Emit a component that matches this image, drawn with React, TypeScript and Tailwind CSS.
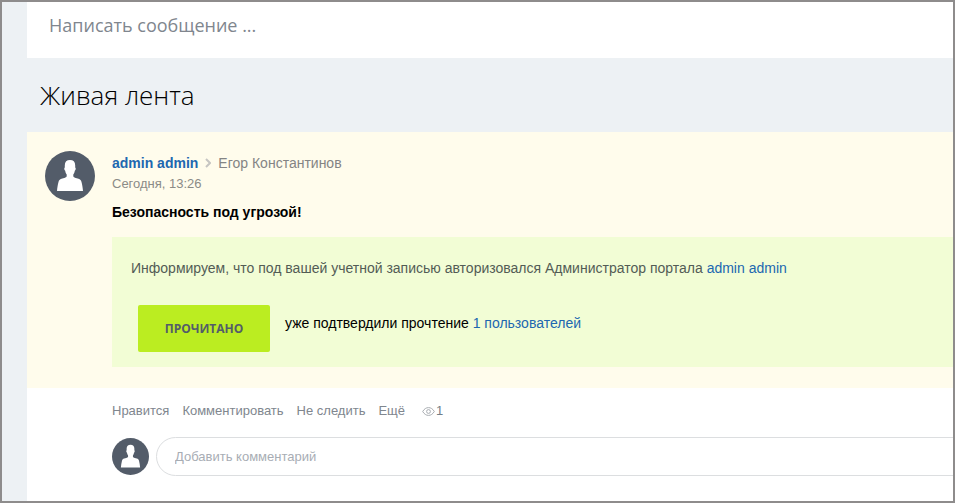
import type { ReactNode } from "react";

function Avatar({ className }: { className: string }) {
  return (
    <svg viewBox="0 0 50 50" className={`shrink-0 ${className}`} aria-hidden="true">
      <circle cx="25" cy="25" r="25" fill="#535c69" />
      <path
        fill="#fff"
        d="M25 9c3.300 0 5.200 1.900 5.200 5.200v2.300c.8.300.7 2.500-.4 3.300-.3 1.700-.8 2.900-1.500 3.700v1.700c.4 1 1.300 1.400 2.500 1.700l2.700.8c1.700.5 2.600 1.500 3 3.200.7 2.700 1.200 5.600 1.500 9.100H12c.3-3.500.8-6.400 1.500-9.100.4-1.700 1.300-2.700 3-3.200l2.700-.8c1.200-.3 2.100-.7 2.500-1.700v-1.700c-.7-.8-1.200-2-1.500-3.700-1.100-.8-1.200-3-.4-3.300v-2.300C19.800 10.900 21.700 9 25 9z"
      />
    </svg>
  );
}

function Action({ children }: { children: ReactNode }) {
  return (
    <button type="button" className="text-[#80868e]">
      {children}
    </button>
  );
}

export default function App() {
  return (
    <div className="flex min-h-screen overflow-hidden border-2 border-[#8e8c8c] bg-[#edf1f4] pl-[25px] font-['Liberation_Sans',Arial,sans-serif] text-sm">
      <main className="flex min-w-0 flex-1 flex-col">
        <input
          type="text"
          aria-label="Написать сообщение"
          placeholder="Написать сообщение ..."
          className="h-14 w-full bg-white px-[22px] pb-2.5 font-['Open_Sans',sans-serif] text-lg outline-none placeholder:text-[#80868e]"
        />
        <h1 className="px-[13px] py-[17px] font-['Open_Sans',sans-serif] text-[26px] leading-10 font-light text-black">
          Живая лента
        </h1>

        <article className="flex-1 bg-white">
          <div className="flex gap-[17px] bg-[#fffcec] pt-[19px] pb-[21px] pl-[18px]">
            <Avatar className="size-[50px]" />
            <div className="min-w-0 flex-1 pt-0.5">
              <div className="flex items-center leading-5">
                <a href="#author" className="font-bold text-[#2067b0]">
                  admin admin
                </a>
                <svg viewBox="0 0 6 10" className="mx-[7px] h-2.5 w-1.5" aria-hidden="true">
                  <path d="M1 1l4 4-4 4" fill="none" stroke="#c6c5c2" strokeWidth="2" />
                </svg>
                <a href="#recipient" className="text-[#848484]">
                  Егор Константинов
                </a>
              </div>
              <time className="mt-px block text-[13px] leading-5 text-[#8b8b87]">Сегодня, 13:26</time>
              <h2 className="mt-2 leading-5 font-bold text-black">Безопасность под угрозой!</h2>
              <div className="mt-[15px] bg-[#f2fdd5] pt-[21px] pb-[15px] pl-[19px]">
                <p className="leading-5 text-[#535c55]">
                  Информируем, что под вашей учетной записью авторизовался Администратор портала{" "}
                  <a href="#admin" className="text-[#2067b0]">
                    admin admin
                  </a>
                </p>
                <div className="mt-[27px] flex gap-[15px] pl-[7px]">
                  <button
                    type="button"
                    className="h-[47px] w-[132px] rounded-xs bg-[#bbed21] font-['Open_Sans',sans-serif] text-xs font-bold text-[#535c69]"
                  >
                    ПРОЧИТАНО
                  </button>
                  <p className="pt-2 leading-5 text-black">
                    уже подтвердили прочтение{" "}
                    <a href="#readers" className="text-[#2067b0]">
                      1 пользователей
                    </a>
                  </p>
                </div>
              </div>
            </div>
          </div>

          <footer className="pt-[13px] pb-6 pl-[85px]">
            <div className="flex items-center gap-[13px] text-[13px] leading-5">
              <Action>Нравится</Action>
              <Action>Комментировать</Action>
              <Action>Не следить</Action>
              <Action>Ещё</Action>
              <span className="ml-1 flex items-center gap-px text-[#737e86]">
                <svg viewBox="0 0 13 9" className="h-[9px] w-[13px]" fill="none" stroke="#a9adb2" aria-hidden="true">
                  <path d="M.7 4.500C2.200 1.900 4.200.6 6.500.6s4.300 1.300 5.800 3.900c-1.500 2.600-3.500 3.900-5.800 3.900S2.200 7.100.7 4.500z" />
                  <circle cx="6.500" cy="4.500" r="1.900" />
                </svg>
                1
              </span>
            </div>
            <div className="mt-4 flex items-center gap-[7px]">
              <Avatar className="size-[37px]" />
              <input
                type="text"
                aria-label="Добавить комментарий"
                placeholder="Добавить комментарий"
                className="-mr-8 h-[39px] min-w-0 flex-1 rounded-full border border-[#dcdee0] bg-white px-[18px] text-[13px] outline-none placeholder:text-[#a8adb4]"
              />
            </div>
          </footer>
        </article>
      </main>
    </div>
  );
}
